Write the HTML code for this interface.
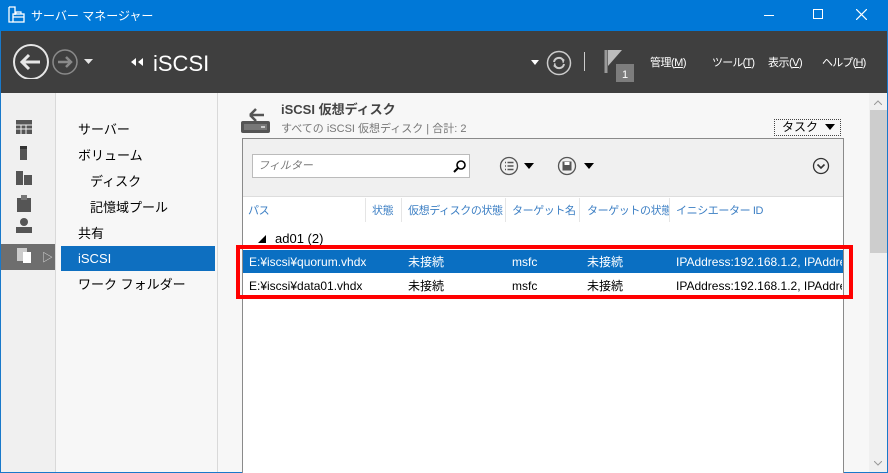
<!DOCTYPE html>
<html><head><meta charset="utf-8"><style>
*{margin:0;padding:0;box-sizing:border-box}
body{width:888px;height:473px;overflow:hidden;font-family:"Liberation Sans","Noto Sans CJK JP",sans-serif;font-size:12px;color:#000;background:#f7f7f7;position:relative}
.a{position:absolute;white-space:nowrap;line-height:16px}
.h{font-size:11px;color:#3c7fc4;letter-spacing:-0.4px}
</style></head><body>
<div class="a" style="left:0;top:0;width:888px;height:473px;border:1px solid #1979ca"></div>
<div class="a" style="left:0;top:0;width:888px;height:31px;background:#0078d7"></div>
<svg class="a" style="left:8px;top:6px" width="18" height="18" viewBox="0 0 18 18"><path d="M1 1h6v8M1 1v15h4" fill="none" stroke="#fff" stroke-width="1.3"/><rect x="5" y="8" width="11" height="8" fill="none" stroke="#fff" stroke-width="1.3"/><path d="M8 8V6h5v2M5 11h11" stroke="#fff" fill="none" stroke-width="1.2"/></svg>
<div class="a" style="left:31px;top:8px;color:#fff;font-size:12px">サーバー マネージャー</div>
<div class="a" style="left:764px;top:15px;width:10px;height:1px;background:#fff"></div>
<div class="a" style="left:813px;top:9px;width:10px;height:10px;border:1px solid #fff"></div>
<svg class="a" style="left:856px;top:9px" width="11" height="11"><path d="M0 0l11 11M11 0L0 11" stroke="#fff" stroke-width="1.2"/></svg>
<div class="a" style="left:1px;top:31px;width:886px;height:62px;background:#3f3f3f"></div>
<svg class="a" style="left:12px;top:43px" width="90" height="36" viewBox="0 0 90 36"><circle cx="19" cy="19" r="17" fill="none" stroke="#e6e6e6" stroke-width="2"/><path d="M10 19h18M17 12l-7 7 7 7" fill="none" stroke="#e6e6e6" stroke-width="3"/><circle cx="53" cy="19" r="12" fill="none" stroke="#8a8a8a" stroke-width="1.5"/><path d="M46 19h13M54 14l5 5-5 5" fill="none" stroke="#8a8a8a" stroke-width="2.5"/><path d="M72 16h9l-4.5 5z" fill="#e6e6e6"/></svg>
<svg class="a" style="left:131px;top:58px" width="14" height="8"><path d="M0 4l5-4v8zM7 4l5-4v8z" fill="#fff"/></svg>
<div class="a" style="left:153px;top:52px;color:#fff;font-size:22px;line-height:24px">iSCSI</div>
<svg class="a" style="left:531px;top:60px" width="8" height="5"><path d="M0 0h8l-4 5z" fill="#fff"/></svg>
<svg class="a" style="left:546px;top:50px" width="26" height="26"><circle cx="13" cy="13" r="11.5" fill="none" stroke="#ccc" stroke-width="1.5"/><path d="M8 12a5 5 0 0 1 9-2M18 14a5 5 0 0 1-9 2" fill="none" stroke="#ccc" stroke-width="2"/><path d="M15 8l3 2-1 3M11 18l-3-2 1-3" fill="#ccc" stroke="#ccc"/></svg>
<div class="a" style="left:584px;top:52px;width:1px;height:19px;background:#ccc"></div>
<svg class="a" style="left:604px;top:48px" width="32" height="35"><path d="M2 2v23" stroke="#999" stroke-width="3"/><path d="M4 2h14l-14 16z" fill="#bbb"/><rect x="12" y="16" width="18" height="18" fill="#7d7d7d"/><text x="18" y="30" fill="#fff" font-size="11" font-family="Liberation Sans">1</text></svg>
<div class="a" style="left:650px;top:55px;color:#fff;font-size:11px;letter-spacing:-0.5px">管理(<u>M</u>)</div>
<div class="a" style="left:712px;top:55px;color:#fff;font-size:11px;letter-spacing:-0.8px">ツール(<u>T</u>)</div>
<div class="a" style="left:768px;top:55px;color:#fff;font-size:11px;letter-spacing:-0.5px">表示(<u>V</u>)</div>
<div class="a" style="left:822px;top:55px;color:#fff;font-size:11px;letter-spacing:-0.8px">ヘルプ(<u>H</u>)</div>
<div class="a" style="left:1px;top:93px;width:54px;height:379px;background:#f0f0f0"></div>
<div class="a" style="left:55px;top:93px;width:1px;height:379px;background:#d9d9d9"></div>
<div class="a" style="left:1px;top:244px;width:54px;height:26px;background:#6e6e6e"></div>
<svg class="a" style="left:14px;top:118px" width="20" height="150" fill="#555"><rect x="2" y="2" width="16" height="14"/><path d="M2 7h16M2 11h16M7 7v9M12 7v9" stroke="#f0f0f0" stroke-width="1"/><rect x="6" y="28" width="7" height="14"/><rect x="6" y="28" width="7" height="3" fill="#333"/><rect x="2" y="53" width="7" height="14"/><rect x="10" y="57" width="8" height="10"/><rect x="3" y="80" width="14" height="14"/><rect x="7" y="77" width="6" height="5" fill="#777"/><circle cx="10" cy="104" r="4"/><rect x="2" y="109" width="16" height="6"/><rect x="3" y="130" width="10" height="13" fill="#ccc"/><rect x="9" y="134" width="8" height="11" fill="#fff"/></svg>
<div class="a" style="left:42px;top:250px;color:#ddd;font-size:11px">▷</div>
<div class="a" style="left:56px;top:93px;width:161px;height:379px;background:#f7f7f7"></div>
<div class="a" style="left:217px;top:93px;width:1px;height:379px;background:#d9d9d9"></div>
<div class="a" style="left:61px;top:246px;width:154px;height:25px;background:#0e6fc0"></div>
<div class="a" style="left:78px;top:122px;font-size:13px">サーバー</div>
<div class="a" style="left:78px;top:148px;font-size:13px">ボリューム</div>
<div class="a" style="left:90px;top:174px;font-size:13px">ディスク</div>
<div class="a" style="left:90px;top:200px;font-size:13px">記憶域プール</div>
<div class="a" style="left:78px;top:226px;font-size:13px">共有</div>
<div class="a" style="left:78px;top:251px;font-size:13px;color:#fff">iSCSI</div>
<div class="a" style="left:78px;top:277px;font-size:13px">ワーク フォルダー</div>
<svg class="a" style="left:240px;top:105px" width="32" height="30"><path d="M10 10l6-6M10 10l6 6M10 10h14" stroke="#555" stroke-width="2.5" fill="none"/><rect x="1" y="16" width="29" height="12" rx="2" fill="#555"/><rect x="4" y="19" width="23" height="6" fill="#777"/><rect x="21" y="21" width="4" height="2" fill="#ccc"/></svg>
<div class="a" style="left:281px;top:102px;font-size:13px;font-weight:bold;color:#444">iSCSI 仮想ディスク</div>
<div class="a" style="left:281px;top:121px;font-size:11px;color:#777">すべての iSCSI 仮想ディスク | 合計: 2</div>
<div class="a" style="left:774px;top:119px;width:67px;height:17px;border:1px dotted #444;background:#f7f7f7"></div>
<div class="a" style="left:782px;top:119px;font-size:12px">タスク</div>
<svg class="a" style="left:825px;top:124px" width="10" height="6"><path d="M0 0h10l-5 6z" fill="#000"/></svg>
<div class="a" style="left:242px;top:138px;width:602px;height:335px;border:1px solid #8a8a8a;border-bottom:none;background:#fff"></div>
<div class="a" style="left:243px;top:139px;width:600px;height:58px;background:#f0f0f0;border-bottom:1px solid #ddd"></div>
<div class="a" style="left:252px;top:154px;width:218px;height:24px;border:1px solid #bbb;background:#fff"></div>
<div class="a" style="left:258px;top:158px;font-size:11px;color:#777;font-style:italic">フィルター</div>
<svg class="a" style="left:453px;top:159px" width="14" height="14"><circle cx="8" cy="6" r="4" fill="none" stroke="#000" stroke-width="1.6"/><path d="M5 9l-4 4" stroke="#000" stroke-width="2"/></svg>
<svg class="a" style="left:498px;top:155px" width="100" height="22"><circle cx="11" cy="11" r="8.5" fill="none" stroke="#555" stroke-width="1.3"/><path d="M7 7.5h1M7 11h1M7 14.5h1M9.5 7.5h6M9.5 11h6M9.5 14.5h6" stroke="#555" stroke-width="1.5"/><path d="M26 8h10l-5 6z" fill="#000"/><circle cx="69" cy="11" r="8.5" fill="none" stroke="#555" stroke-width="1.3"/><rect x="64.5" y="6.5" width="9" height="9" fill="#555"/><rect x="66.5" y="7" width="5" height="3" fill="#fff"/><path d="M86 8h10l-5 6z" fill="#000"/></svg>
<svg class="a" style="left:812px;top:157px" width="18" height="18"><circle cx="9" cy="9" r="7.5" fill="none" stroke="#333" stroke-width="1.3"/><path d="M5.5 7.5l3.5 3.5 3.5-3.5" fill="none" stroke="#333" stroke-width="1.6"/></svg>
<div class="a h" style="left:248px;top:203px">パス</div>
<div class="a h" style="left:372px;top:203px">状態</div>
<div class="a h" style="left:408px;top:203px;width:96px;overflow:hidden">仮想ディスクの状態</div>
<div class="a h" style="left:512px;top:203px;width:66px;overflow:hidden">ターゲット名</div>
<div class="a h" style="left:587px;top:203px;width:82px;overflow:hidden">ターゲットの状態</div>
<div class="a h" style="left:676px;top:203px">イニシエーター ID</div>
<div class="a" style="left:365px;top:198px;width:1px;height:24px;background:#e5e5e5"></div>
<div class="a" style="left:401px;top:198px;width:1px;height:24px;background:#e5e5e5"></div>
<div class="a" style="left:505px;top:198px;width:1px;height:24px;background:#e5e5e5"></div>
<div class="a" style="left:579px;top:198px;width:1px;height:24px;background:#e5e5e5"></div>
<div class="a" style="left:669px;top:198px;width:1px;height:24px;background:#e5e5e5"></div>
<svg class="a" style="left:258px;top:235px" width="8" height="8"><path d="M8 0v8H0z" fill="#000"/></svg>
<div class="a" style="left:275px;top:231px;font-size:13px">ad01 (2)</div>
<div class="a" style="left:243px;top:250px;width:600px;height:23px;background:#0a6fc2"></div>
<div class="a" style="left:249px;top:254px;font-size:12px;color:#fff">E:¥iscsi¥quorum.vhdx</div>
<div class="a" style="left:408px;top:254px;font-size:12px;color:#fff">未接続</div>
<div class="a" style="left:512px;top:254px;font-size:12px;color:#fff">msfc</div>
<div class="a" style="left:587px;top:254px;font-size:12px;color:#fff">未接続</div>
<div class="a" style="left:676px;top:254px;width:166px;overflow:hidden;font-size:12px;color:#fff">IPAddress:192.168.1.2, IPAddress</div>
<div class="a" style="left:249px;top:278px;font-size:12px">E:¥iscsi¥data01.vhdx</div>
<div class="a" style="left:408px;top:278px;font-size:12px">未接続</div>
<div class="a" style="left:512px;top:278px;font-size:12px">msfc</div>
<div class="a" style="left:587px;top:278px;font-size:12px">未接続</div>
<div class="a" style="left:676px;top:278px;width:166px;overflow:hidden;font-size:12px">IPAddress:192.168.1.2, IPAddress</div>
<div class="a" style="left:236px;top:245px;width:617px;height:54px;border:4px solid #f00"></div>
<div class="a" style="left:869px;top:93px;width:18px;height:379px;background:#f0f0f0"></div>
<div class="a" style="left:870px;top:110px;width:17px;height:143px;background:#cdcdcd"></div>
<svg class="a" style="left:874px;top:100px" width="8" height="5"><path d="M0 5l4-4 4 4" fill="none" stroke="#999"/></svg>
<svg class="a" style="left:874px;top:461px" width="8" height="5"><path d="M0 0l4 4 4-4" fill="none" stroke="#999"/></svg>
</body></html>
